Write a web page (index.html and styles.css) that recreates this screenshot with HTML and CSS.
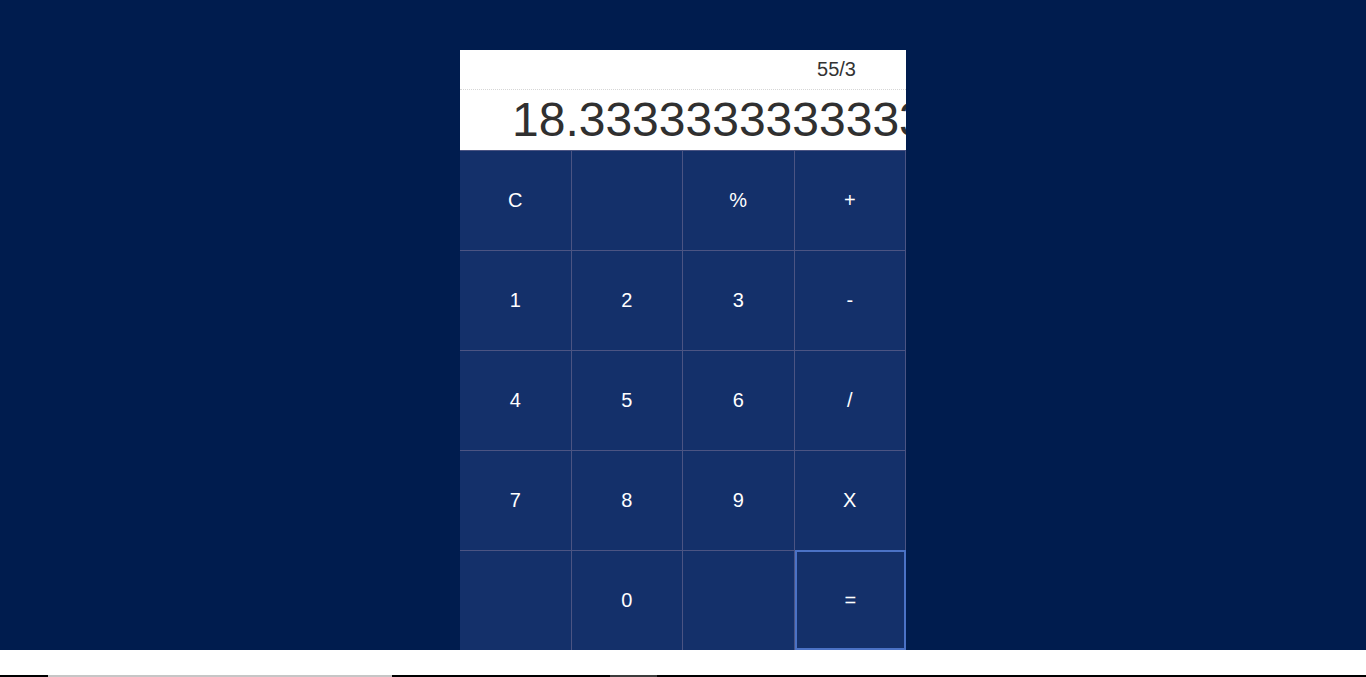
FILE: index.html
```html
<!DOCTYPE html>
<html lang="en">
<head>
<meta charset="utf-8">
<title>Calculator</title>
<link rel="stylesheet" href="styles.css">
</head>
<body>
<div class="page">
  <div class="calc">
    <div class="display">
      <div class="expr">55/3</div>
      <div class="result">18.3333333333333</div>
    </div>
    <div class="keys">
      <button class="key">C</button>
      <button class="key"></button>
      <button class="key">%</button>
      <button class="key">+</button>
      <button class="key">1</button>
      <button class="key">2</button>
      <button class="key">3</button>
      <button class="key">-</button>
      <button class="key">4</button>
      <button class="key">5</button>
      <button class="key">6</button>
      <button class="key">/</button>
      <button class="key">7</button>
      <button class="key">8</button>
      <button class="key">9</button>
      <button class="key">X</button>
      <button class="key"></button>
      <button class="key">0</button>
      <button class="key"></button>
      <button class="key key-eq">=</button>
    </div>
  </div>
</div>
<div class="bar">
  <span class="seg seg-black seg-a"></span>
  <span class="seg seg-light seg-b"></span>
  <span class="seg seg-black seg-c"></span>
  <span class="seg seg-dark seg-d"></span>
  <span class="seg seg-black seg-e"></span>
</div>
</body>
</html>
```
FILE: styles.css
```css
html, body {
  margin: 0;
  padding: 0;
  background: #ffffff;
  font-family: "Liberation Sans", Arial, sans-serif;
}
.page {
  background: #001c4e;
  padding-top: 50px;
  height: 600px;
  display: flex;
  justify-content: center;
}
.calc {
  width: 446px;
  display: flex;
  flex-direction: column;
}
.display {
  background: #ffffff;
  height: 100px;
  display: flex;
  flex-direction: column;
  overflow: hidden;
}
.expr {
  height: 40px;
  box-sizing: border-box;
  border-bottom: 1px dotted #d6d6d6;
  padding: 0 50px;
  text-align: right;
  font-size: 20px;
  line-height: 38px;
  color: #333333;
}
.result {
  height: 60px;
  padding: 0 0 0 52px;
  font-size: 48px;
  line-height: 60px;
  color: #303030;
  white-space: nowrap;
}
.keys {
  display: grid;
  grid-template-columns: repeat(4, 1fr);
  grid-auto-rows: 100px;
}
.key {
  box-sizing: border-box;
  margin: 0;
  padding: 0;
  background: #14306a;
  border: none;
  border-top: 1px solid #4b5483;
  border-right: 1px solid #4b5483;
  color: #ffffff;
  font-family: "Liberation Sans", Arial, sans-serif;
  font-size: 20px;
  cursor: pointer;
}
.key-eq {
  border: 2px solid #4b72c6;
}
.bar {
  margin-top: 25px;
  height: 2px;
  display: flex;
}
.seg { display: block; height: 2px; }
.seg-black { background: #000000; }
.seg-light { background: #c6c6c6; }
.seg-dark { background: #3c3c3c; }
.seg-a { width: 48px; }
.seg-b { width: 344px; }
.seg-c { width: 218px; }
.seg-d { width: 47px; }
.seg-e { flex: 1; }
```
